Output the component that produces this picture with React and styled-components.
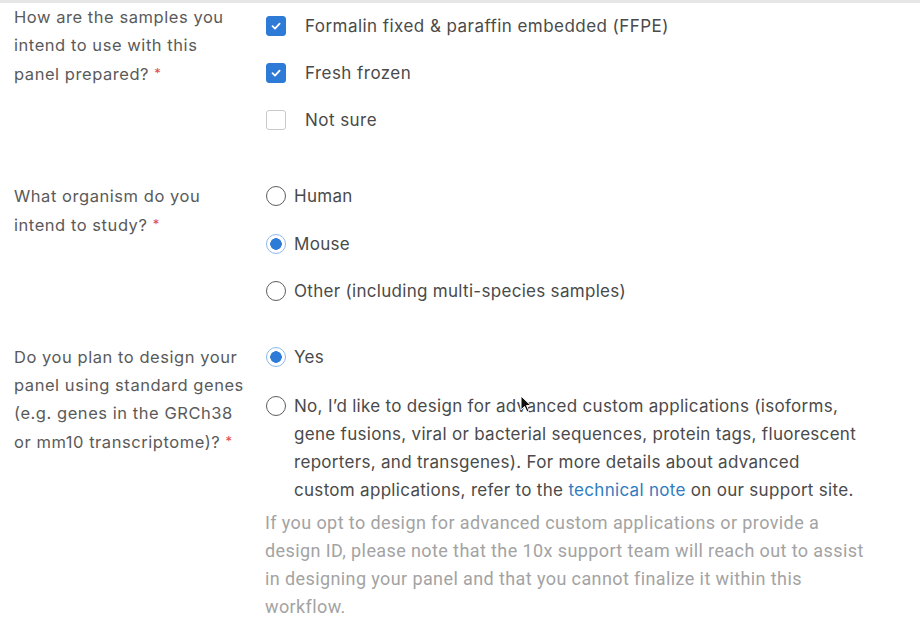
import React from "react";
import styled, { createGlobalStyle } from "styled-components";

const GlobalStyle = createGlobalStyle`
  body {
    margin: 0;
    background: #fff;
    font-family: "Inter", "Liberation Sans", sans-serif;
  }
`;

export default function App() {
  return (
    <>
      <GlobalStyle />
      <Page>
        <Section>
          <Question>
            How are the samples you intend to use with this panel prepared? <Req>*</Req>
          </Question>
          <Options $top={9} $gap={19}>
            <Check label="Formalin fixed & paraffin embedded (FFPE)" checked />
            <Check label="Fresh frozen" checked />
            <Check label="Not sure" />
          </Options>
        </Section>

        <Section $space={48}>
          <Question>
            What organism do you intend to study? <Req>*</Req>
          </Question>
          <Options $gap={19.5}>
            <Radio label="Human" />
            <Radio label="Mouse" selected />
            <Radio label="Other (including multi-species samples)" />
          </Options>
        </Section>

        <Section $space={38}>
          <Question>
            Do you plan to design your panel using standard genes (e.g. genes in the GRCh38 or mm10
            transcriptome)? <Req>*</Req>
          </Question>
          <Options $gap={21}>
            <Radio label="Yes" selected />
            <Radio
              label={
                <>
                  No, I’d like to design for advanced custom applications (isoforms, gene fusions,
                  viral or bacterial sequences, protein tags, fluorescent reporters, and
                  transgenes). For more details about advanced custom applications, refer to the{" "}
                  <Link href="#">technical note</Link> on our support site.
                </>
              }
            />
            <Help>
              If you opt to design for advanced custom applications or provide a design ID, please
              note that the 10x support team will reach out to assist in designing your panel and
              that you cannot finalize it within this workflow.
            </Help>
          </Options>
        </Section>

        <Cursor viewBox="0 0 12 18">
          <path d="M1 1 L1 15 L4.5 11.5 L7 17 L9 16 L6.6 10.6 L11 10.6 Z" fill="#111" stroke="#fff" strokeWidth="1" />
        </Cursor>
      </Page>
    </>
  );
}

const Check = ({ label, checked }) => (
  <Row>
    <Box $on={checked}>
      {checked && (
        <svg width="12" height="12" viewBox="0 0 12 12">
          <path d="M2.5 6.2 L5 8.6 L9.6 3.6" fill="none" stroke="#fff" strokeWidth="1.8" strokeLinecap="round" strokeLinejoin="round" />
        </svg>
      )}
    </Box>
    <CheckText>{label}</CheckText>
  </Row>
);

const Radio = ({ label, selected }) => (
  <Row>
    <Circle $on={selected} />
    <RadioText>{label}</RadioText>
  </Row>
);

const Page = styled.div`
  position: relative;
  width: 920px;
  height: 624px;
  overflow: hidden;
  box-sizing: border-box;
  padding: 0 0 0 14px;
  border-top: 3px solid #e6e6e6;
  color: #505050;
  font-size: 17px;
  line-height: 28px;
  letter-spacing: 0.45px;
`;

const Section = styled.div`
  display: grid;
  grid-template-columns: 233px 1fr;
  column-gap: 18px;
  margin-top: ${(p) => p.$space || 0}px;
`;

const Question = styled.div`
  color: #5a5a5a;
  font-size: 16.5px;
  letter-spacing: 0.55px;
  line-height: 28px;
`;

const Req = styled.span`
  color: #e0474c;
  font-size: 13px;
  vertical-align: 2px;
`;

const Options = styled.div`
  display: flex;
  flex-direction: column;
  gap: ${(p) => p.$gap}px;
  padding-top: ${(p) => p.$top || 0}px;
`;

const Row = styled.label`
  display: flex;
  align-items: flex-start;
`;

const Box = styled.span`
  flex: none;
  width: 20px;
  height: 20px;
  margin-top: 4px;
  margin-left: 1px;
  box-sizing: border-box;
  border-radius: 3px;
  display: flex;
  align-items: center;
  justify-content: center;
  background: ${(p) => (p.$on ? "#2d7bd6" : "#fff")};
  border: 1.5px solid ${(p) => (p.$on ? "#2d7bd6" : "#c9c9c9")};
`;

const Circle = styled.span`
  flex: none;
  width: 20px;
  height: 20px;
  margin-top: 4px;
  margin-left: 1px;
  box-sizing: border-box;
  border-radius: 50%;
  border: 1.5px solid ${(p) => (p.$on ? "#8db8ea" : "#5d5d5d")};
  background: ${(p) => (p.$on ? "radial-gradient(circle, #2d7bd6 0 5.5px, #fff 6px)" : "#fff")};
`;

const CheckText = styled.span`
  margin-left: 19px;
  color: #4a4a4a;
`;

const RadioText = styled.span`
  margin-left: 8px;
  max-width: 566px;
  letter-spacing: 0.3px;
  color: #4a4a4a;
`;

const Link = styled.a`
  color: #2f7cc1;
  text-decoration: none;
`;

const Help = styled.p`
  margin: -16px 0 0;
  max-width: 603px;
  font-family: "Roboto", "Liberation Sans", sans-serif;
  font-size: 18px;
  letter-spacing: 0.4px;
  line-height: 28px;
  color: #a3a3a3;
`;

const Cursor = styled.svg`
  position: absolute;
  left: 520px;
  top: 392px;
  width: 12px;
  height: 18px;
`;
